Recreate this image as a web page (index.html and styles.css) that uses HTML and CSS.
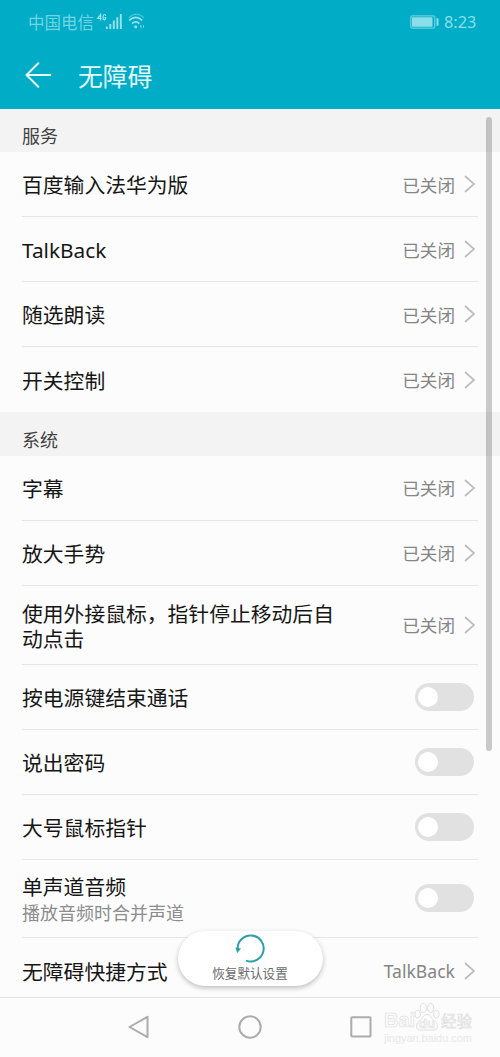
FILE: index.html
```html
<!DOCTYPE html>
<html lang="zh-CN">
<head>
<meta charset="utf-8">
<title>无障碍</title>
<link rel="stylesheet" href="styles.css">
</head>
<body>
<div class="screen">
  <header class="top">
    <div class="status">
      <span class="carrier">中国电信</span>
      <svg class="signal" width="28" height="20" viewBox="0 0 28 20">
        <path class="net" d="M4.6 7.6V1.4L1.6 5.4H5.6M9.7 2.8Q9.4 1.4 8.4 1.5Q7.1 1.6 7.1 4.2Q7.1 6.9 8.4 6.9Q9.7 6.9 9.7 4.6H8.4"/>
        <path class="bars" d="M10.8 13.5V16M14.3 11V16M17.8 7.5V16M21.3 4.3V16M24.8 1V16"/>
      </svg>
      <svg class="wifi" width="18" height="20" viewBox="0 0 18 20">
        <path class="wifi-outer" d="M.8 4.8Q8.2 -2.6 15.8 4.8"/>
        <path class="wifi-inner" d="M1.2 7.4Q7.7 1.4 14.2 7.4M4 10.7Q7.7 7.2 11.4 10.7"/>
        <circle cx="7.7" cy="13.8" r="1.6"/><path d="M12 12.2h1.4v3h-.6zM14.8 11.4l1.4 2.2-1 1.4z"/>
      </svg>
      <svg class="battery" width="29" height="14" viewBox="0 0 29 14">
        <rect class="shell" x=".8" y=".8" width="24" height="12.4" rx="1.5"/><rect x="2" y="2.2" width="20.5" height="9.6" rx=".5"/><rect x="26.5" y="3.2" width="2" height="7.6" rx=".6"/>
      </svg>
      <span class="clock">8:23</span>
    </div>
    <div class="titlebar">
      <svg class="back" width="27" height="26" viewBox="0 0 27 26"><path d="M25.3 13H1.5M13.3 1.2L1.5 13L13.3 24.8"/></svg>
      <h1>无障碍</h1>
    </div>
  </header>
  <main class="list">
    <h2>服务</h2>
    <div class="row"><div class="label">百度输入法华为版</div><span class="value">已关闭</span><svg class="chev" viewBox="0 0 11 18"><path d="M1 1L10 9L1 17"/></svg></div>
    <div class="row"><div class="label">TalkBack</div><span class="value">已关闭</span><svg class="chev" viewBox="0 0 11 18"><path d="M1 1L10 9L1 17"/></svg></div>
    <div class="row"><div class="label">随选朗读</div><span class="value">已关闭</span><svg class="chev" viewBox="0 0 11 18"><path d="M1 1L10 9L1 17"/></svg></div>
    <div class="row last"><div class="label">开关控制</div><span class="value">已关闭</span><svg class="chev" viewBox="0 0 11 18"><path d="M1 1L10 9L1 17"/></svg></div>
    <h2>系统</h2>
    <div class="row"><div class="label">字幕</div><span class="value">已关闭</span><svg class="chev" viewBox="0 0 11 18"><path d="M1 1L10 9L1 17"/></svg></div>
    <div class="row"><div class="label">放大手势</div><span class="value">已关闭</span><svg class="chev" viewBox="0 0 11 18"><path d="M1 1L10 9L1 17"/></svg></div>
    <div class="row tall"><div class="label">使用外接鼠标，指针停止移动后自<br>动点击</div><span class="value">已关闭</span><svg class="chev" viewBox="0 0 11 18"><path d="M1 1L10 9L1 17"/></svg></div>
    <div class="row"><div class="label">按电源键结束通话</div><span class="switch"></span></div>
    <div class="row"><div class="label">说出密码</div><span class="switch"></span></div>
    <div class="row"><div class="label">大号鼠标指针</div><span class="switch"></span></div>
    <div class="row mono"><div class="label">单声道音频<div class="sub">播放音频时合并声道</div></div><span class="switch"></span></div>
    <div class="row last"><div class="label">无障碍快捷方式</div><span class="value">TalkBack</span><svg class="chev" viewBox="0 0 11 18"><path d="M1 1L10 9L1 17"/></svg></div>
    <div class="scrollbar"></div>
    <button class="reset">
      <svg width="30" height="30" viewBox="0 0 30 30"><path class="arc" d="M2.7 16.5A13 13 0 1 1 11 27.6"/><path class="tip" d="M.5 14.6L6 15.6L2.2 20z"/></svg>
      <span>恢复默认设置</span>
    </button>
  </main>
  <nav class="nav">
    <svg width="22" height="24" viewBox="0 0 22 24"><path d="M19.5 1.8V22.2L1.5 12z"/></svg>
    <svg width="24" height="24" viewBox="0 0 24 24"><circle cx="12" cy="12" r="10.7"/></svg>
    <svg width="22" height="22" viewBox="0 0 22 22"><rect x="1.3" y="1.3" width="19.2" height="19.2" rx=".8"/></svg>
    <div class="mark">
      <div class="brand"><span class="bai">Bai</span><svg width="26" height="30" viewBox="0 0 26 30"><ellipse cx="9.3" cy="6" rx="3" ry="4.5"/><ellipse cx="16.7" cy="6" rx="3" ry="4.5"/><ellipse cx="3.7" cy="12.2" rx="2.8" ry="4"/><ellipse cx="22.3" cy="12.2" rx="2.8" ry="4"/><path d="M13 12.5C9 12.5 8.5 17 5 19.5C1 22.5 2 28 6.5 28H19.5C24 28 25 22.5 21 19.5C17.5 17 17 12.5 13 12.5Z"/><text x="13" y="26" text-anchor="middle">du</text></svg><span class="jingyan">经验</span></div>
      <div class="url">jingyan.baidu.com</div>
    </div>
  </nav>
</div>
</body>
</html>
```

FILE: styles.css
```css
* { box-sizing: border-box; }
body { margin: 0; font-family: "Noto Sans", "Noto Sans CJK SC", sans-serif; background: #fcfcfc; color: #161616; }
.screen { width: 500px; height: 1057px; overflow: hidden; display: flex; flex-direction: column; }
svg { fill: none; flex: none; display: block; }
.top { height: 108.5px; background: #00acc6; flex: none; }
.status { height: 43px; padding: 0 25px 0 28px; display: flex; align-items: center; color: #8adeea; }
.status svg { fill: #8adeea; }
.carrier { font: 400 16.5px/24px "Noto Sans CJK SC", sans-serif; width: 68px; white-space: nowrap; color: #75d4e2; }
.signal, .wifi { margin-top: 3px; }
.status .signal path { fill: none; stroke: #9ae3ec; }
.net { stroke-width: 1.2; }
.status .bars { stroke-width: 1.9; }
.wifi { margin-left: 4px; }
.status .wifi-outer { fill: none; stroke: #4dc6d8; stroke-width: 1.2; }
.status .wifi-inner { fill: none; stroke: #9ae3ec; stroke-width: 1.6; }
.battery { margin-left: auto; margin-right: 1px; }
.status .shell { fill: none; stroke: #66cfde; stroke-width: 1.3; }
.clock { margin-left: 4px; font-size: 16.3px; line-height: 24px; width: 31px; white-space: nowrap; }
.titlebar { height: 64px; padding-left: 25px; display: flex; align-items: center; }
.back { stroke: #e8fbfd; stroke-width: 2; stroke-linecap: round; stroke-linejoin: round; }
h1 { margin: 0 0 0 26px; font: 400 24.8px/34px "Noto Sans CJK SC", sans-serif; color: #e4fafd; }
.list { position: relative; height: 888px; flex: none; }
h2 { margin: 0; height: 43.5px; padding: 7.5px 0 0 22px; background: #f3f3f3; font-size: 18px; line-height: 40px; font-weight: 400; color: #424242; }
.row { height: 65px; margin: 0 22px; border-bottom: 1px solid #e6e6e6; display: flex; align-items: center; }
.last { border-bottom: 0; }
.tall { height: 79px; }
.mono { height: 78.5px; }
.label { flex: 1; padding-top: 3px; font-size: 20.8px; line-height: 25px; white-space: nowrap; }
.tall .label { padding-top: 5px; }
.mono .label { padding-top: 5px; }
.sub { font-size: 18px; line-height: 26px; color: #8d8d8d; }
.value { padding-top: 1px; font-size: 17.6px; line-height: 26px; color: #858585; }
.chev { width: 11px; height: 18px; margin: 0 3px 0 9px; stroke: #bdbdbd; stroke-width: 1.7; }
.switch { width: 59px; height: 28px; margin-right: 4px; border-radius: 14px; background: #e1e1e1; padding: 4px 2.5px; }
.switch::before { content: ""; display: block; width: 20px; height: 20px; border-radius: 50%; background: #fff; }
.scrollbar { position: absolute; left: 486px; top: 8px; width: 6px; height: 634px; border-radius: 3px; background: rgba(0, 0, 0, .2); }
.reset { position: absolute; left: 178px; top: 822px; width: 145px; height: 55px; padding: 2px 0 0; border: 0; border-radius: 28px; background: #fff; box-shadow: 0 2px 5px rgba(0, 0, 0, .25); display: flex; flex-direction: column; align-items: center; font: 400 12.6px/16px "Noto Sans CJK SC", sans-serif; color: #6c6c6c; }
.reset svg { margin-right: 2px; }
.arc { stroke: #2aa0aa; stroke-width: 2; }
.tip { fill: #2aa0aa; }
.reset span { margin: 2px 1px 0 0; }
.nav { flex: 1; border-top: 1px solid #e3e3e3; padding-left: 128px; display: flex; align-items: center; stroke: #acacac; stroke-width: 2; stroke-linejoin: round; }
.nav > svg + svg { margin-left: 88px; }
.nav > svg + svg + svg { margin-left: 88px; }
.mark { margin-left: 12px; width: 92px; color: #fafafa; stroke: none; align-self: flex-start; padding-top: 4px; }
.brand { display: flex; height: 30px; align-items: flex-end; -webkit-text-stroke: .6px #dedede; }
.bai { font: 700 20px/23px "Liberation Sans", sans-serif; width: 30px; }
.brand svg { stroke: #e0e0e0; stroke-width: 1; overflow: visible; }
.brand text { font: 700 13px "Liberation Sans", sans-serif; stroke: #dcdcdc; stroke-width: .6; fill: #fafafa; }
.jingyan { font: 400 15.5px/23px "Noto Sans CJK SC", sans-serif; margin-left: 1px; white-space: nowrap; color: #f4f4f4; }
.url { font: 400 10.9px/12px "Liberation Sans", sans-serif; color: #e8e8e8; white-space: nowrap; }
```
